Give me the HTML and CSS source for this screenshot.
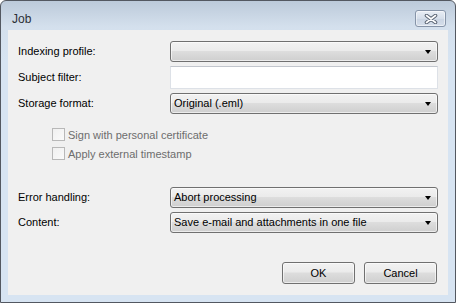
FILE: index.html
```html
<!DOCTYPE html>
<html lang="en">
<head>
    <meta charset="UTF-8">
    <title>Job</title>
    <link rel="stylesheet" href="styles.css">
</head>
<body>
    <div class="window">
        <div class="titlebar">
            <span class="title">Job</span>
            <button class="close" type="button" aria-label="Close">
                <svg width="14" height="10" viewBox="0 0 14 10">
                    <path d="M2.5 1.5 L11.5 8.5 M11.5 1.5 L2.5 8.5" stroke="#5b6574" stroke-width="3.6" stroke-linecap="round"/>
                    <path d="M2.5 1.5 L11.5 8.5 M11.5 1.5 L2.5 8.5" stroke="#ffffff" stroke-width="1.6" stroke-linecap="round"/>
                </svg>
            </button>
        </div>

        <div class="client">
            <div class="form-grid first">
                <label>Indexing profile:</label>
                <div class="combo"><span></span><i class="arrow"></i></div>

                <label>Subject filter:</label>
                <div class="textbox"></div>

                <label>Storage format:</label>
                <div class="combo"><span>Original (.eml)</span><i class="arrow"></i></div>
            </div>

            <div class="checks">
                <div class="check"><span class="box"></span>Sign with personal certificate</div>
                <div class="check"><span class="box"></span>Apply external timestamp</div>
            </div>

            <div class="form-grid second">
                <label>Error handling:</label>
                <div class="combo"><span>Abort processing</span><i class="arrow"></i></div>

                <label>Content:</label>
                <div class="combo"><span>Save e-mail and attachments in one file</span><i class="arrow"></i></div>
            </div>

            <div class="buttons">
                <button type="button" class="btn">OK</button>
                <button type="button" class="btn">Cancel</button>
            </div>
        </div>
    </div>
</body>
</html>
```

FILE: styles.css
```css
* {
    box-sizing: border-box;
}

body {
    margin: 0;
    font-family: "Liberation Sans", Arial, sans-serif;
    font-size: 11px;
    color: #000;
    background: #ffffff;
}

.window {
    width: 456px;
    height: 303px;
    border: 1px solid #535861;
    border-radius: 6px 6px 0 0;
    padding: 0 7px 7px 7px;
    display: flex;
    flex-direction: column;
    background: linear-gradient(#bccada 0px, #d4e0ed 26px, #d7e4f2 60px, #d7e4f2 100%);
}

.titlebar {
    height: 29px;
    display: flex;
    align-items: flex-start;
    justify-content: space-between;
}

.title {
    font-size: 12px;
    color: #2b2f36;
    padding: 11px 0 0 4px;
}

.close {
    margin: 9px 2px 0 0;
    width: 31px;
    height: 17px;
    padding: 0;
    border: 1px solid #8694a8;
    border-radius: 3px;
    background: linear-gradient(#e9eef5, #d5deea 50%, #c9d4e2 51%, #d6dfeb);
    display: flex;
    align-items: center;
    justify-content: center;
    box-shadow: inset 0 0 0 1px rgba(255, 255, 255, 0.5);
}

.client {
    flex: 1;
    background: #f0f0f0;
    padding: 11px 10px 0 10px;
    display: flex;
    flex-direction: column;
}

.form-grid {
    display: grid;
    grid-template-columns: 152px 1fr;
    grid-template-rows: 21px 23px 21px;
    row-gap: 4px;
    align-items: center;
}

.form-grid.second {
    grid-template-rows: 21px 21px;
    margin-top: 24px;
}

.form-grid label {
    padding-bottom: 1px;
}

.combo {
    position: relative;
    height: 21px;
    border: 1px solid #707070;
    border-radius: 3px;
    background: linear-gradient(#f2f2f2 0%, #ebebeb 45%, #dddddd 50%, #cfcfcf 100%);
    display: flex;
    align-items: center;
    padding: 0 0 1px 3px;
    box-shadow: inset 0 0 0 1px rgba(255, 255, 255, 0.6);
}

.arrow {
    position: absolute;
    right: 6px;
    top: 8px;
    width: 0;
    height: 0;
    border-left: 3.5px solid transparent;
    border-right: 3.5px solid transparent;
    border-top: 4px solid #000;
}

.textbox {
    height: 23px;
    background: #ffffff;
    border: 1px solid #dde1e7;
    border-top-color: #c2c6cd;
}

.checks {
    margin-top: 11px;
    padding-left: 34px;
    color: #6d6d6d;
}

.check {
    height: 19px;
    display: flex;
    align-items: center;
}

.box {
    width: 13px;
    height: 13px;
    border: 1px solid #b8b8b8;
    background: linear-gradient(135deg, #f0f0f0, #fafafa);
    margin-right: 3px;
}

.buttons {
    margin-top: 29px;
    margin-right: 1px;
    display: flex;
    justify-content: flex-end;
    gap: 9px;
}

.btn {
    width: 73px;
    height: 22px;
    font-family: inherit;
    font-size: 11px;
    color: #000;
    border: 1px solid #707070;
    border-radius: 3px;
    background: linear-gradient(#f2f2f2 0%, #ebebeb 45%, #dddddd 50%, #cfcfcf 100%);
    box-shadow: inset 0 0 0 1px rgba(255, 255, 255, 0.6);
    padding: 0 0 1px 0;
}
```
